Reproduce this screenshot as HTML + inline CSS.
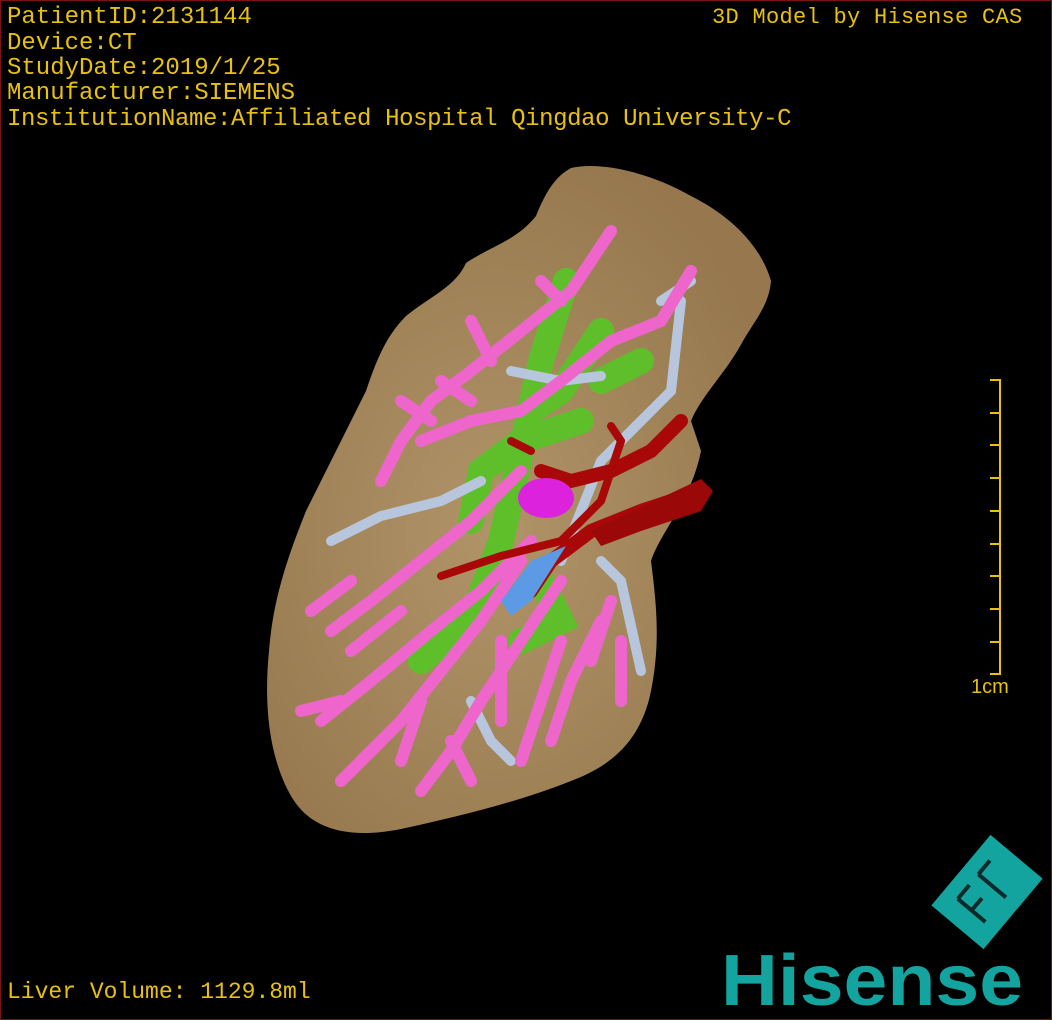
<!DOCTYPE html>
<html><head><meta charset="utf-8"><style>
html,body{margin:0;padding:0;background:#000;}
#w{position:relative;width:1050px;height:1018px;border:1px solid #7a1414;overflow:hidden;background:#000;}
.t{position:absolute;left:6px;color:#e8c010;font-family:"Liberation Mono",monospace;font-size:24px;line-height:25px;letter-spacing:0px;white-space:pre;}
</style></head><body><div id="w">
<div class="t" style="top:4px">PatientID:2131144</div>
<div class="t" style="top:30px">Device:CT</div>
<div class="t" style="top:55px">StudyDate:2019/1/25</div>
<div class="t" style="top:80px">Manufacturer:SIEMENS</div>
<div class="t" style="top:106px;font-size:24px;letter-spacing:-0.4px">InstitutionName:Affiliated Hospital Qingdao University-C</div>
<div class="t" style="top:4px;left:711px;font-size:22px;letter-spacing:0.3px">3D Model by Hisense CAS</div>
<div class="t" style="top:979px;font-size:23px">Liver Volume: 1129.8ml</div>
<svg width="1050" height="1018" style="position:absolute;left:0;top:0">
<defs><radialGradient id="lg" cx="0.45" cy="0.55" r="0.6"><stop offset="0" stop-color="#b09468"/><stop offset="1" stop-color="#97784e"/></radialGradient></defs>
<path d="M570,167 C600,160 650,172 690,195 C730,215 760,245 770,280 C768,305 752,322 742,340 C725,372 700,395 690,420 L700,450 C690,500 660,530 650,560 C655,600 660,640 650,690 C640,740 610,765 570,780 C520,800 460,815 400,828 C350,838 310,830 290,795 C270,760 262,710 268,650 C272,600 285,560 305,510 C325,470 345,430 365,390 C375,360 385,335 405,315 C430,295 455,285 465,262 C490,245 515,240 535,215 C545,190 555,175 570,167 Z" fill="url(#lg)"/>
<g fill="none" stroke="#5fbf2a" stroke-linecap="round" stroke-width="26">
<path d="M565,280 L540,360 L520,450 L500,540 L470,620 L420,660"/>
<path d="M580,420 L520,440 L480,470 L470,520"/>
<path d="M600,330 L560,390 L530,410"/>
<path d="M640,360 L600,380"/>
<path d="M540,580 L560,620 L520,640"/>
</g>
<g fill="none" stroke="#b7c6dc" stroke-linecap="round" stroke-width="10">
<path d="M330,540 L380,515 L440,500 L480,480"/>
<path d="M660,300 L690,280 M680,300 L670,390 L640,420 L600,460 L580,510 L560,560"/>
<path d="M600,560 L620,580 L640,670"/>
<path d="M510,370 L560,380 L600,375"/>
<path d="M470,700 L490,740 L510,760"/>
</g>
<g fill="none" stroke="#ee66cc" stroke-linecap="round" stroke-linejoin="round" stroke-width="12">
<path d="M610,230 L570,290 L520,330 L470,370 L430,400 L400,440 L380,480"/>
<path d="M690,270 L660,320 L610,340 L560,380 L520,410 L470,420 L420,440"/>
<path d="M470,320 L490,360 M440,380 L470,400 M540,280 L560,300 M400,400 L430,420"/>
<path d="M520,470 L470,520 L420,560 L370,600 L330,630"/>
<path d="M530,540 L480,590 L430,630 L370,680 L320,720"/>
<path d="M520,560 L480,620 L440,670 L400,720 L360,760"/>
<path d="M560,580 L520,640 L480,700 L450,750 L420,790"/>
<path d="M560,640 L540,700 L520,760"/>
<path d="M600,620 L570,680 L550,740"/>
<path d="M610,600 L590,660 M620,640 L620,700 M500,640 L500,720 M350,580 L310,610 M300,710 L340,700 M400,610 L350,650 M420,700 L400,760 M380,740 L340,780 M450,740 L470,780"/>
</g>
<g fill="none" stroke="#a80808" stroke-linecap="round" stroke-width="14">
<path d="M700,490 L640,510 L590,530 L550,560 L530,590"/>
<path d="M680,420 L650,450 L610,470 L570,480 L540,470"/>
<path d="M620,440 L600,500 L560,540 L500,555 L440,575" stroke-width="8"/>
<path d="M510,440 L530,450 M610,425 L620,440" stroke-width="8"/>
</g>
<path d="M700,478 L712,490 L700,510 L640,530 L600,545 L590,530 Z" fill="#9a0808"/>
<path d="M565,545 L530,600 L510,615 L500,600 L530,560 Z" fill="#5d9ae6"/>
<ellipse cx="545" cy="497" rx="28" ry="20" fill="#dd22dd"/>
<g stroke="#e8c010" stroke-width="2">
<line x1="999" y1="378" x2="999" y2="674"/>
<line x1="989" y1="379" x2="999" y2="379"/><line x1="989" y1="412" x2="999" y2="412"/><line x1="989" y1="444" x2="999" y2="444"/><line x1="989" y1="477" x2="999" y2="477"/><line x1="989" y1="510" x2="999" y2="510"/><line x1="989" y1="543" x2="999" y2="543"/><line x1="989" y1="575" x2="999" y2="575"/><line x1="989" y1="608" x2="999" y2="608"/><line x1="989" y1="641" x2="999" y2="641"/><line x1="989" y1="673" x2="999" y2="673"/>
</g>
<text x="970" y="692" fill="#e8c010" font-family="Liberation Sans,sans-serif" font-size="20">1cm</text>
<g transform="translate(986,891) rotate(-50)">
<rect x="-46" y="-34" width="92" height="68" fill="#14a4a0"/>
<path d="M-24,-18 L-24,18 M-24,-18 L-6,-18 M-24,0 L-8,0 M8,-18 L8,18 M8,-18 L26,-18" stroke="#0a2b2a" stroke-width="4" fill="none"/>
</g>
<text x="720" y="1004" fill="#14a4a0" font-family="Liberation Sans,sans-serif" font-weight="bold" font-size="72" textLength="302" lengthAdjust="spacingAndGlyphs">Hisense</text>
</svg>
</div></body></html>
